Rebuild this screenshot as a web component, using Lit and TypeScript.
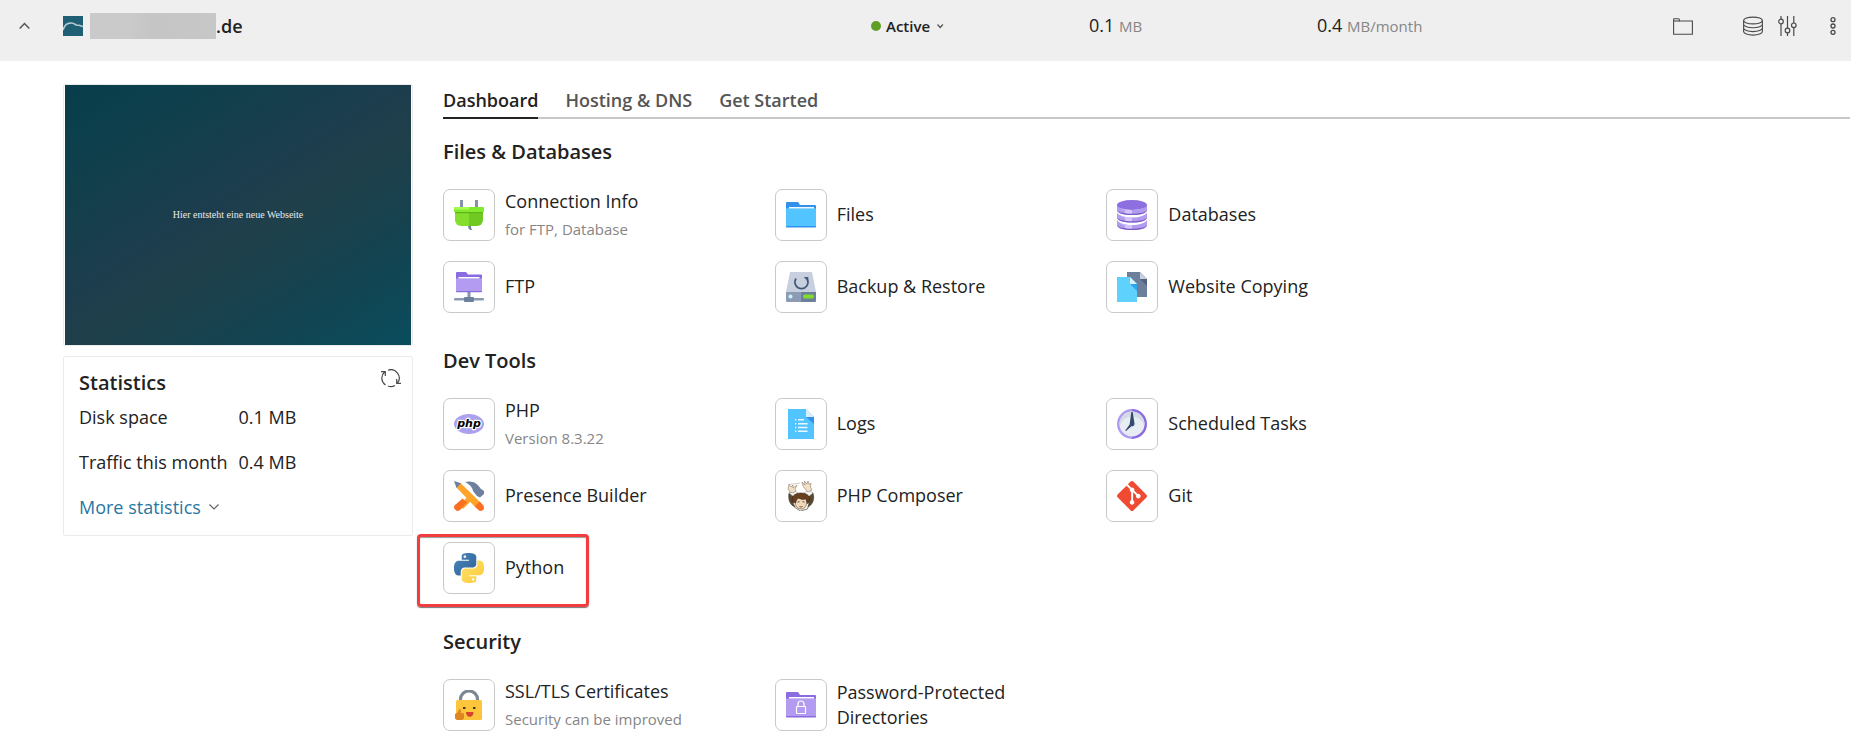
import { LitElement, html, svg, css, nothing } from "lit";
import type { TemplateResult } from "lit";
import { customElement, property, state } from "lit/decorators.js";
import { classMap } from "lit/directives/class-map.js";

const PYTHON_HALF =
  "M14.25.18l.9.2.73.26.59.3.45.32.34.34.25.34.16.33.1.3.04.26.02.2-.01.13V8.5l-.05.63-.13.55-.21.46-.26.38-.3.31-.33.25-.35.19-.35.14-.33.1-.3.07-.26.04-.21.02H8.77l-.69.05-.59.14-.5.22-.41.27-.33.32-.27.35-.2.36-.15.37-.1.35-.07.32-.04.27-.02.21v3.06H3.17l-.21-.03-.28-.07-.32-.12-.35-.18-.36-.26-.36-.36-.35-.46-.32-.59-.28-.73-.21-.88-.14-1.05-.05-1.23.06-1.22.16-1.04.24-.87.32-.71.36-.57.4-.44.42-.33.42-.24.4-.16.36-.1.32-.05.24-.01h.16l.06.01h8.16v-.83H6.18l-.01-2.75-.02-.37.05-.34.11-.31.17-.28.25-.26.31-.23.38-.2.44-.18.51-.15.58-.12.64-.1.71-.06.77-.04.84-.02 1.27.05zm-6.3 1.98l-.23.33-.08.41.08.41.23.34.33.22.41.09.41-.09.33-.22.23-.34.08-.41-.08-.41-.23-.33-.33-.22-.41-.09-.41.09z";

const GIT_MARK =
  "M23.546 10.93L13.067.452c-.604-.603-1.582-.603-2.188 0L8.708 2.627l2.76 2.76c.645-.215 1.379-.07 1.889.441.516.515.658 1.258.438 1.9l2.658 2.66c.645-.223 1.387-.078 1.9.435.721.72.721 1.884 0 2.604-.719.719-1.881.719-2.6 0-.539-.541-.674-1.337-.404-1.996L12.86 8.955v6.525c.176.086.342.203.488.348.713.721.713 1.883 0 2.6-.719.721-1.889.721-2.609 0-.719-.719-.719-1.879 0-2.598.182-.18.387-.316.605-.406V8.835c-.217-.091-.424-.222-.6-.401-.545-.545-.676-1.342-.396-2.009L7.636 3.7.45 10.881c-.6.605-.6 1.584 0 2.189l10.48 10.477c.604.604 1.582.604 2.186 0l10.43-10.43c.605-.603.605-1.582 0-2.187";

const dbLayer = (y: number) => svg`
  <path d="M0 ${y}c2 3.4 8 5 15 5s13-1.600 15-5v5c0 3-6.500 5-15 5S0 ${y + 8} 0 ${y + 5}z" fill="#b29cf0"/>
  <path d="M0 ${y}c2 3.4 8 5 15 5v4.200c-3 0-5-.3-7-.8v-3.200C4 ${y + 4} 1 ${y + 2.5} 0 ${y}z" fill="#d3c6fa"/>
  <path d="M0 ${y + 5}c0 3 6.500 5 15 5s15-2 15-5c-1 2.200-7 3.700-15 3.700S1 ${y + 7.2} 0 ${y + 5}z" fill="#7c5bc4"/>`;

/* Tool icons, each drawn on a 30 x 30 board. */
const ICONS: Record<string, TemplateResult> = {
  plug: svg`
    <path d="M6 0h3v8H6zM21 0h3v8h-3z" fill="#8393ad"/>
    <path d="M14 25h3c0 2 0 3 1 5h-2c-1.500-1-2-3-2-5z" fill="#7284a0"/>
    <path d="M1 12h14v14H7a6 6 0 0 1-6-6z" fill="#84de2e"/>
    <path d="M15 12h14v8a6 6 0 0 1-6 6h-8z" fill="#70c923"/>
    <path d="M1 12h28v1.200H1z" fill="#5eb41c"/>
    <rect y="7" width="30" height="5" rx="1" fill="#82ea2c"/>
    <path d="M1 7h14v2.500H0V8a1 1 0 0 1 1-1z" fill="#a6fb55"/>`,
  files: svg`
    <path d="M1 2h11l2 3h15a1 1 0 0 1 1 1v5H0V3a1 1 0 0 1 1-1z" fill="#3391ee"/>
    <path d="M0 9c0-.6.4-.8 1-.8h28c.6 0 1 .2 1 .8v18H0z" fill="#52c4ff"/>
    <path d="M3 7h25v1.500H3z" fill="#f1f9ff"/>
    <path d="M0 26h30v.5c0 .6-.4 1-1 1H1c-.6 0-1-.4-1-1z" fill="#3391ee"/>`,
  databases: svg`
    ${dbLayer(20)}${dbLayer(12.5)}${dbLayer(5)}
    <ellipse cx="15" cy="5" rx="15" ry="5" fill="#8e6fdf"/>`,
  ftp: svg`
    <path d="M13.500 19h3v8h-3z" fill="#8393ad"/>
    <rect y="26" width="30" height="2.600" rx="1" fill="#8b9bb4"/>
    <rect x="10" y="25" width="10" height="5" rx="1" fill="#6c7f9b"/>
    <path d="M3 0h9l2 2.500h13a1 1 0 0 1 1 1V8H2V1a1 1 0 0 1 1-1z" fill="#8b6be0"/>
    <path d="M2 6.500h26V20H2z" fill="#b29bf1"/>
    <path d="M4.500 5h21v1.500h-21z" fill="#fff"/>
    <path d="M2 19h26v.5c0 .5-.4.8-1 .8H3c-.6 0-1-.3-1-.8z" fill="#8b6be0"/>`,
  backup: svg`
    <path d="M4 0h22l4 20H0z" fill="#c8d0e0"/>
    <path d="M0 20h15v10H1a1 1 0 0 1-1-1z" fill="#8c9cb5"/>
    <path d="M15 20h15v9a1 1 0 0 1-1 1H15z" fill="#6d7f9b"/>
    <circle cx="4.500" cy="24.500" r="2" fill="#c9f1ff"/>
    <rect x="17" y="22.500" width="11" height="4" rx="2" fill="#82dc2c"/>
    <path d="M10 6.500a6.500 6.500 0 1 0 11.400 1" fill="none" stroke="#43597a" stroke-width="1.700"/>
    <path d="M17.800 5h4.500v5z" fill="#43597a"/>`,
  copying: svg`
    <path d="M10 0h13l7 7v18H10z" fill="#6d7f9b"/>
    <path d="M23 0l7 7h-7z" fill="#c8d0e0"/>
    <path d="M23 7h7v7z" fill="#51637f"/>
    <path d="M0 5h13l7 7v18H0z" fill="#5fd1fd"/>
    <path d="M13 5l7 7h-7z" fill="#d3f3ff"/>
    <path d="M13 12h7v7z" fill="#2fa5ee"/>`,
  php: svg`
    <ellipse cx="15" cy="15" rx="15" ry="10" fill="#aaa1ef"/>
    <text x="15" y="18" text-anchor="middle" font-family="'DejaVu Sans', sans-serif" font-size="11" font-weight="700" font-style="italic" fill="#000" stroke="#fff" stroke-width="2.400" paint-order="stroke" stroke-linejoin="round">php</text>`,
  logs: svg`
    <path d="M2 0h18l8 8v22H2z" fill="#52c4ff"/>
    <path d="M20 0l8 8h-8z" fill="#d6effd"/>
    <path d="M20 8h8v7z" fill="#3190ea"/>
    <g fill="#eaf8ff"><path d="M12 10h6v1.500h-6zM12 14h9.500v1.500H12zM12 17.800h9.500v1.500H12zM12 21.600h9.500v1.500H12z"/>
    <path d="M9 10h1.300v1.500H9zM9 14h1.300v1.500H9zM9 17.800h1.300v1.500H9zM9 21.600h1.300v1.500H9z"/></g>`,
  clock: svg`
    <path d="M15 0a15 15 0 0 0 0 30z" fill="#b19bf1"/>
    <path d="M15 0a15 15 0 0 1 0 30z" fill="#8b6be0"/>
    <circle cx="15" cy="15" r="12.500" fill="#e8edf4"/>
    <path d="M2.500 15a12.500 12.500 0 0 1 25 0l-.3 2a12.500 12.500 0 0 0-24.400 0z" fill="#d4dae6"/>
    <path d="M14.300 3h1.400l1.800 11.600a2.500 2.500 0 0 1-3 2.700L9 22l-.8-.6 4.400-6z" fill="#344b6d"/>`,
  builder: svg`
    <path d="M17 13l3.500 3.500L9 28l-4-4z" fill="#ffa32b"/>
    <path d="M8.500 17.500l4.500 4L6 29c-1.200 1.200-3 1.200-4.200.2l-1-1c-1-1.200-1-2.700 0-4z" fill="#fb6f20"/>
    <path d="M11 1c7-2 12.500 1 15.500 6.500L30 10v3l-4 3.500-3-1.500-4-5c-.5-4-4-7-8-9z" fill="#6d819f"/>
    <path d="M2.500 6.500L6.500 2l21 20.500-5 5z" fill="#ffa32b"/>
    <path d="M0 0l7 2.200L2.500 7z" fill="#6d7f9b"/>
    <path d="M25.500 20.500l3.700 3.700c1.100 1.300 1 3.700-.1 4.900-1.100 1-3.300 1.200-4.800-.1l-3.400-3.700z" fill="#fb6f20"/>`,
  composer: svg`
    <path d="M3 12c-1 7 1 12 6 14l3-9-5-5zM27 12c2 7-1 12-5 14l-3-9 4-5z" fill="#594b32" stroke="#332a1d" stroke-width=".6"/>
    <path d="M3 12l5-3 4 3-4 4zM27 12l-4-3-5 3 4 4z" fill="#f4f5f3" stroke="#8c8c86" stroke-width=".5"/>
    <path d="M4 11L2 8l1-5 2 3 2-2v3l4-3-2 4 1 2-3 2z" fill="#f2dfc5" stroke="#776854" stroke-width=".5"/>
    <path d="M3 3.500l11-1.500" fill="none" stroke="#b5ada0" stroke-width=".6"/>
    <path d="M20 9l-3-4-1-4 3 3-.5-4L21 3l1-3 1 3.500L25 2l-.5 4 1.500 3-4 2z" fill="#f2dfc5" stroke="#776854" stroke-width=".5"/>
    <path d="M6.500 21l3 6 5 3 7-2 2-8z" fill="#f7f4ec" stroke="#3b352d" stroke-width=".6"/>
    <path d="M9.500 17h11v5c0 4-2.500 6-5.500 6s-5.500-2-5.500-6z" fill="#f1d8ba" stroke="#443421" stroke-width=".5"/>
    <path d="M6.500 21c-2-5 2-9 8.500-9s10.500 4 8 9.500l-1.800 1c.3-2-.7-3.500-1.700-4.500-3 1-5 0-7-1-1.500 1-2.500 2.500-3 5z" fill="#68401f" stroke="#32200f" stroke-width=".6"/>
    <path d="M11.500 21l2-.3M16.500 20.700l2 .3M13.500 25.500c1 .6 2 .6 3 0" stroke="#3a2a1b" stroke-width=".8" fill="none"/>`,
  git: svg`<path transform="scale(1.25)" d=${GIT_MARK} fill="#f04a32"/>`,
  python: svg`
    <defs>
      <linearGradient id="pyBlue" x1="0" y1="0" x2="1" y2="1"><stop offset="0" stop-color="#4a86bd"/><stop offset="1" stop-color="#2f6195"/></linearGradient>
      <linearGradient id="pyYellow" x1="1" y1="1" x2="0" y2="0"><stop offset="0" stop-color="#ffe06b"/><stop offset="1" stop-color="#fccb38"/></linearGradient>
    </defs>
    <path transform="scale(1.25)" d=${PYTHON_HALF} fill="url(#pyBlue)"/>
    <path transform="rotate(180 15 15) scale(1.25)" d=${PYTHON_HALF} fill="url(#pyYellow)"/>`,
  ssl: svg`
    <path d="M6.500 12V9.500a8.500 8.500 0 0 1 17 0V12" fill="none" stroke="#7c8791" stroke-width="3.200"/>
    <rect x="2" y="10" width="26" height="20" rx="1.500" fill="#fcc53b"/>
    <path d="M9 17h2.500v2H9zM19 17h2.500v2H19z" fill="#4c3b1a"/>
    <path d="M12 22h7.500c0 3-1.500 4.800-3.700 4.800S12 25 12 22z" fill="#d64430"/>
    <path d="M5 19.500c1.500-.8 2.200.2 2 1.500l-.3 1.800L10 23.500v5L8 30H3l-2-1.500V24l2.500-1.500z" fill="#e08524"/>`,
  protected: svg`
    <path d="M1 2h11l2 3h15a1 1 0 0 1 1 1v5H0V3a1 1 0 0 1 1-1z" fill="#8b6be0"/>
    <path d="M0 8.500h30V27H0z" fill="#b29bf1"/>
    <path d="M3 7h25v1.500H3z" fill="#fff"/>
    <path d="M0 26h30v.5c0 .6-.4 1-1 1H1c-.6 0-1-.4-1-1z" fill="#8b6be0"/>
    <rect x="10.500" y="16.500" width="9" height="7" rx=".8" fill="none" stroke="#fff" stroke-width="1.200"/>
    <path d="M12 16.500V14a3 3 0 0 1 6 0v2.500" fill="none" stroke="#fff" stroke-width="1.200"/>`,
};

interface Tool {
  icon: string;
  title: string;
  note?: string;
  marked?: boolean;
}

const SECTIONS: { heading: string; tools: Tool[] }[] = [
  {
    heading: "Files & Databases",
    tools: [
      { icon: "plug", title: "Connection Info", note: "for FTP, Database" },
      { icon: "files", title: "Files" },
      { icon: "databases", title: "Databases" },
      { icon: "ftp", title: "FTP" },
      { icon: "backup", title: "Backup & Restore" },
      { icon: "copying", title: "Website Copying" },
    ],
  },
  {
    heading: "Dev Tools",
    tools: [
      { icon: "php", title: "PHP", note: "Version 8.3.22" },
      { icon: "logs", title: "Logs" },
      { icon: "clock", title: "Scheduled Tasks" },
      { icon: "builder", title: "Presence Builder" },
      { icon: "composer", title: "PHP Composer" },
      { icon: "git", title: "Git" },
      { icon: "python", title: "Python", marked: true },
    ],
  },
  {
    heading: "Security",
    tools: [
      { icon: "ssl", title: "SSL/TLS Certificates", note: "Security can be improved" },
      { icon: "protected", title: "Password-Protected Directories" },
    ],
  },
];

const base = css`
  * {
    box-sizing: border-box;
  }
  button {
    font: inherit;
    color: inherit;
    background: none;
    border: 0;
    padding: 0;
    cursor: pointer;
  }
  svg {
    display: block;
    flex: none;
  }
  h2 {
    margin: 0;
    font-size: 20px;
    line-height: 28px;
    font-weight: 600;
  }
`;

@customElement("domain-bar")
class DomainBar extends LitElement {
  static styles = [
    base,
    css`
      :host {
        display: grid;
        grid-template-columns: 852fr 218fr 228fr 356fr 178px;
        align-items: center;
        background: #efefef;
        padding: 12px 0 21px 19px;
      }
      .name {
        display: flex;
        align-items: center;
        height: 28px;
        font-weight: 600;
      }
      .favicon {
        margin-left: 33px;
      }
      .masked {
        width: 126px;
        height: 26px;
        margin-left: 7px;
        background: linear-gradient(90deg, #cacaca 0 30%, #c5c5c5 50%, #c7c7c7);
      }
      .status {
        display: flex;
        align-items: center;
        gap: 5px;
        font-size: 15px;
        font-weight: 600;
      }
      .dot {
        width: 10px;
        height: 10px;
        border-radius: 50%;
        background: #5f9f26;
      }
      .unit {
        font-size: 15px;
        color: #868686;
      }
      .actions {
        display: flex;
        align-items: center;
        color: #4a4a4a;
      }
      .folder {
        margin-right: 50px;
      }
      .sliders {
        margin: 0 30px 0 14px;
      }
    `,
  ];

  render() {
    return html`
      <div class="name">
        <button aria-label="Collapse">
          <svg width="11" height="8" viewBox="0 0 11 8" fill="none" stroke="#505050" stroke-width="1.400"><path d="M.7 6.500L5.500 1.500l4.800 5"/></svg>
        </button>
        <svg class="favicon" width="20" height="20" viewBox="0 0 20 20">
          <rect width="20" height="20" fill="#1f5f74"/>
          <path d="M0 14C1.500 9 4 7 8 7c3 0 3.500 1 5 2 2.500 0 4 .5 7 1.500" fill="none" stroke="#b5ccd4" stroke-width="1.600"/>
        </svg>
        <span class="masked"></span><span>.de</span>
      </div>
      <button class="status">
        <span class="dot"></span>Active
        <svg width="10" height="8" viewBox="0 0 10 8" fill="none" stroke="#505050" stroke-width="1.200"><path d="M2.500 2.500L5.200 5.500l2.700-3"/></svg>
      </button>
      <div>0.1 <span class="unit">MB</span></div>
      <div>0.4 <span class="unit">MB/month</span></div>
      <div class="actions">
        <button class="folder" aria-label="Files">
          <svg width="20" height="20" viewBox="0 0 20 20" fill="none" stroke="currentColor" stroke-width="1.100"><path d="M.6 4.600V3.500c0-.4.3-.7.7-.7h4c.7 0 .9.300 1 .8l.2 1.400h12.900v13.200H.6z"/><path d="M.6 5h6"/></svg>
        </button>
        <button aria-label="Databases">
          <svg width="20" height="20" viewBox="0 0 20 20" fill="none" stroke="currentColor" stroke-width="1.100"><ellipse cx="10" cy="4.500" rx="9.400" ry="3.400"/><path d="M.6 4.500v11c0 2 4.200 3.600 9.400 3.600s9.400-1.600 9.400-3.600v-11M.6 8.200c0 2 4.200 3.600 9.400 3.600s9.400-1.600 9.400-3.600M.6 12c0 2 4.200 3.600 9.400 3.600s9.400-1.600 9.400-3.600"/></svg>
        </button>
        <button class="sliders" aria-label="Settings">
          <svg width="20" height="20" viewBox="0 0 20 20" fill="none" stroke="currentColor" stroke-width="1.200"><circle cx="4" cy="5.500" r="2.300"/><circle cx="10.500" cy="14.500" r="2.300"/><circle cx="16.800" cy="9.300" r="2.300"/><path d="M4 0v3.200M4 7.800V20M10.500 0v12.200M10.500 16.800V20M16.800 0v7M16.800 11.600V20"/></svg>
        </button>
        <button aria-label="More actions">
          <svg width="12" height="20" viewBox="0 0 12 20" fill="none" stroke="currentColor" stroke-width="1.300"><circle cx="6" cy="3.700" r="2"/><circle cx="6" cy="10" r="2"/><circle cx="6" cy="16.300" r="2"/></svg>
        </button>
      </div>
    `;
  }
}

@customElement("site-sidebar")
class SiteSidebar extends LitElement {
  static styles = [
    base,
    css`
      :host {
        display: flex;
        flex-direction: column;
        gap: 10px;
      }
      .preview,
      .stats {
        border: 1px solid #ebebeb;
        border-radius: 2px;
      }
      .preview {
        padding: 0 1px;
      }
      .shot {
        display: grid;
        place-items: center;
        aspect-ratio: 4 / 3;
        background: linear-gradient(148deg, #093c4a, #0c404c 12%, #1d3d4d 46%, #1f404a 56%, #15424f 74%, #0a4d5d);
        color: #e6ebed;
        font: 10px/16px "Liberation Serif", serif;
        text-decoration: none;
      }
      .stats {
        padding: 12px 11px 15px 15px;
      }
      .head {
        display: flex;
        justify-content: space-between;
        align-items: start;
        margin-bottom: 8px;
      }
      dl {
        display: grid;
        grid-template-columns: auto 1fr;
        gap: 20px 11px;
        margin: 0 0 20px;
      }
      dd {
        margin: 0;
      }
      .more {
        display: flex;
        align-items: center;
        gap: 8px;
        color: #2a769f;
      }
    `,
  ];

  render() {
    return html`
      <div class="preview"><a class="shot" href="#preview">Hier entsteht eine neue Webseite</a></div>
      <section class="stats">
        <div class="head">
          <h2>Statistics</h2>
          <button aria-label="Refresh statistics">
            <svg width="20" height="20" viewBox="0 0 20 20" fill="none" stroke="#4a4a4a" stroke-width="1.200"><path d="M4.500 16A8.300 8.300 0 0 1 3.500 3M7 1.200A8.300 8.300 0 0 1 16.500 14M14 16.400a8.300 8.300 0 0 1-7 .6M0 2.600h4.300v4.300M20 14.400h-4.300v-4.300"/></svg>
          </button>
        </div>
        <dl>
          <dt>Disk space</dt>
          <dd>0.1 MB</dd>
          <dt>Traffic this month</dt>
          <dd>0.4 MB</dd>
        </dl>
        <button class="more">
          More statistics
          <svg width="10" height="8" viewBox="0 0 10 8" fill="none" stroke="#606060" stroke-width="1.100"><path d="M.5 1.500L5 6l4.500-4.500"/></svg>
        </button>
      </section>
    `;
  }
}

@customElement("tool-link")
class ToolLink extends LitElement {
  @property({ attribute: false }) tool!: Tool;

  static styles = [
    base,
    css`
      :host {
        display: flex;
      }
      .link {
        position: relative;
        display: flex;
        align-items: center;
        gap: 10px;
        min-height: 52px;
        color: inherit;
        text-decoration: none;
      }
      .frame {
        display: grid;
        place-items: center;
        flex: none;
        width: 52px;
        height: 52px;
        border: 1px solid #c9c9c9;
        border-radius: 7px;
      }
      .label {
        display: grid;
        gap: 4px;
        padding-bottom: 1px;
      }
      .note {
        font-size: 15px;
        line-height: 22px;
        color: #868686;
      }
      .marked::after {
        content: "";
        position: absolute;
        inset: -8px -25px -13px -26px;
        border: 3px solid #f23d3f;
        border-radius: 4px;
        box-shadow: 0 1px 1px #777, inset 0 1px 1px #999;
        pointer-events: none;
      }
    `,
  ];

  render() {
    const { icon, title, note, marked } = this.tool;
    return html`
      <a class=${classMap({ link: true, marked: !!marked })} href="#${icon}">
        <span class="frame"><svg width="30" height="30" viewBox="0 0 30 30" aria-hidden="true">${ICONS[icon]}</svg></span>
        <span class="label">
          <span>${title}</span>
          ${note ? html`<span class="note">${note}</span>` : nothing}
        </span>
      </a>
    `;
  }
}

@customElement("app-root")
class AppRoot extends LitElement {
  @state() private tab = "Dashboard";

  static styles = [
    base,
    css`
      :host {
        display: block;
        background: #fff;
        color: #222;
        font: 18px/25px "Open Sans", "Noto Sans", sans-serif;
      }
      .page {
        display: grid;
        grid-template-columns: 350px minmax(0, 1fr);
        gap: 30px;
        align-items: start;
        padding: 23px 1px 19px 63px;
      }
      .tabs {
        display: flex;
        gap: 27px;
        box-shadow: inset 0 -2px #c8c8c8;
      }
      .tab {
        padding: 4px 0;
        border-bottom: 2px solid transparent;
        font-weight: 600;
        color: #555;
      }
      .current {
        color: #222;
        border-color: #222;
      }
      .group {
        margin-top: 34px;
      }
      .tabs + .group {
        margin-top: 19px;
      }
      .tools {
        display: grid;
        grid-template-columns: repeat(3, minmax(0, 1fr));
        gap: 20px 30px;
        max-width: 965px;
        margin: 23px 0 0;
        padding: 0;
        list-style: none;
      }
    `,
  ];

  render() {
    return html`
      <domain-bar></domain-bar>
      <div class="page">
        <site-sidebar></site-sidebar>
        <main>
          <div class="tabs" role="tablist">
            ${["Dashboard", "Hosting & DNS", "Get Started"].map(
              (name) => html`<button
                role="tab"
                aria-selected=${this.tab === name}
                class=${classMap({ tab: true, current: this.tab === name })}
                @click=${() => (this.tab = name)}
              >${name}</button>`,
            )}
          </div>
          ${SECTIONS.map(
            (section) => html`
              <section class="group">
                <h2>${section.heading}</h2>
                <ul class="tools">
                  ${section.tools.map((tool) => html`<li><tool-link .tool=${tool}></tool-link></li>`)}
                </ul>
              </section>
            `,
          )}
        </main>
      </div>
    `;
  }
}
